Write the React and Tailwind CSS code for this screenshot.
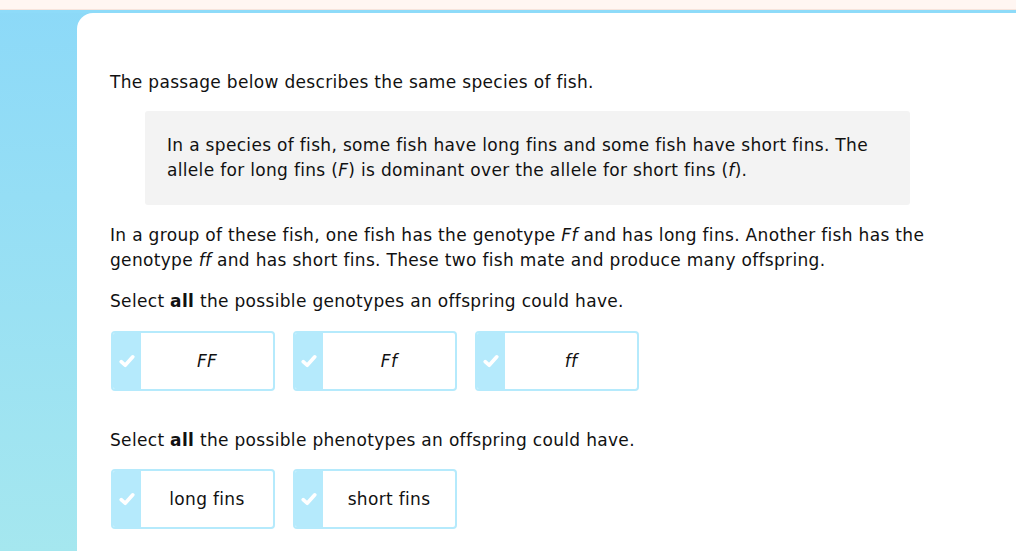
import React from 'react';

const Check = () => (
  <svg width="16" height="16" viewBox="0 0 16 16" fill="none">
    <path d="M2.2 8.6 L6.2 12.3 L13.8 3.8" stroke="#ffffff" strokeWidth="3.6" strokeLinecap="round" strokeLinejoin="round" />
  </svg>
);

const Choice = ({ label, italic }) => (
  <div className="flex h-[60px] w-[164px] overflow-hidden rounded-[4px] border-2 border-[#b5eafc] bg-white">
    <div className="flex w-[28px] items-center justify-center bg-[#b5eafc]">
      <Check />
    </div>
    <div className={`flex flex-1 items-center justify-center text-[#111] ${italic ? 'italic' : ''}`}>
      {label}
    </div>
  </div>
);

export default function App() {
  return (
    <div className="flex h-[551px] w-[1016px] flex-col overflow-hidden bg-gradient-to-b from-[#8cd9f8] to-[#a5e7ef] text-[17px] leading-[25px] tracking-[0.32px] text-[#111]" style={{ fontFamily: '"DejaVu Sans", Verdana, sans-serif' }}>
      {/* top strip */}
      <div className="h-[10px] shrink-0 border-b border-[#f6e4dc] bg-[#fff6f2]" />
      <div className="h-[3px] shrink-0 bg-[#8edbf9]" />

      <div className="ml-[77px] flex-1 rounded-tl-[16px] bg-white pl-[33px] pr-[33px] pt-[57px]">
        <p>The passage below describes the same species of fish.</p>

        <div className="ml-[35px] mt-[16px] w-[765px] rounded-[3px] bg-[#f3f3f3] px-[22px] py-[22px]">
          In a species of fish, some fish have long fins and some fish have short fins. The allele for long fins (<i>F</i>) is dominant over the allele for short fins (<i>f</i>).
        </div>

        <p className="mt-[18px]">
          In a group of these fish, one fish has the genotype <i>Ff</i> and has long fins. Another fish has the genotype <i>ff</i> and has short fins. These two fish mate and produce many offspring.
        </p>

        <p className="mt-[16px]">
          Select <b>all</b> the possible genotypes an offspring could have.
        </p>

        <div className="ml-[1px] mt-[17px] flex gap-[18px]">
          <Choice label="FF" italic />
          <Choice label="Ff" italic />
          <Choice label="ff" italic />
        </div>

        <p className="mt-[37px]">
          Select <b>all</b> the possible phenotypes an offspring could have.
        </p>

        <div className="ml-[1px] mt-[16px] flex gap-[18px]">
          <Choice label="long fins" />
          <Choice label="short fins" />
        </div>
      </div>
    </div>
  );
}
